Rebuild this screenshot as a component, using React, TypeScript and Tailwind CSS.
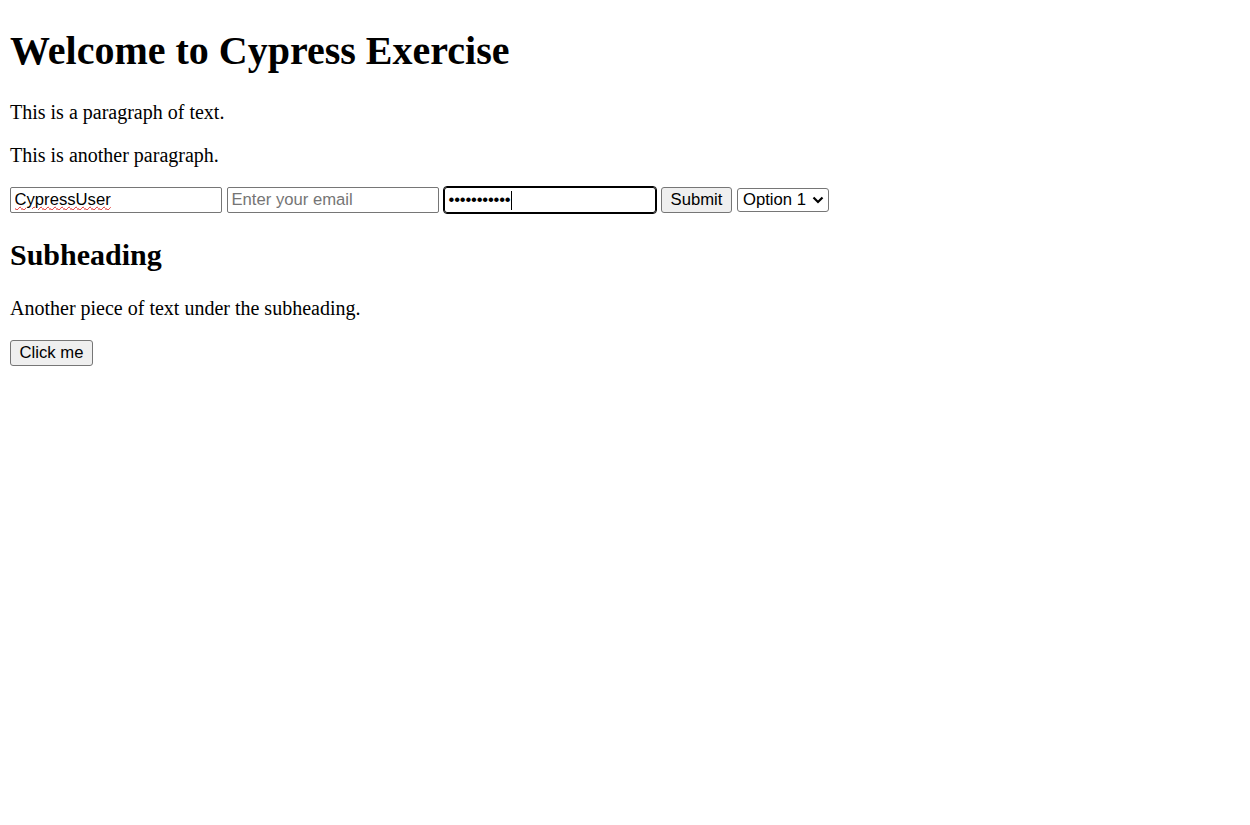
import React from "react";

const sans = "font-['Liberation_Sans',Arial,sans-serif]";

export default function App() {
  return (
    <div className="min-h-screen bg-white px-[10px] text-black font-['Liberation_Serif','Times_New_Roman',serif]">
      <div className="pt-[0.1px]">
        <h1 className="mt-[26.8px] mb-[26.8px] text-[40px] font-bold leading-[normal]">
          Welcome to Cypress Exercise
        </h1>
        <p className="my-[20px] text-[20px] leading-[normal]">This is a paragraph of text.</p>
        <p className="my-[20px] text-[20px] leading-[normal]">This is another paragraph.</p>

        <div className={`flex h-[26.4px] items-start gap-[5px] pt-[0.4px] ${sans} text-[16.67px] leading-[normal]`}>
          <input
            type="text"
            defaultValue="CypressUser"
            spellCheck={false}
            className="box-border h-[26px] w-[212px] rounded-[2px] border border-[#767676] bg-white px-[3.5px] text-black underline decoration-[#e02020] decoration-wavy decoration-[1px] underline-offset-[1px] outline-none"
          />
          <input
            type="email"
            placeholder="Enter your email"
            className="box-border h-[26px] w-[212px] rounded-[2px] border border-[#767676] bg-white px-[3.5px] text-black outline-none placeholder:text-[#757575]"
          />
          <div className="box-border flex h-[26px] w-[212px] items-center rounded-[3px] border border-black bg-white px-[3.5px] outline outline-1 outline-black">
            <span className="tracking-[-0.2px]">•••••••••••</span>
            <span className="ml-[1px] h-[19px] w-[1px] bg-black" />
          </div>
          <button
            type="button"
            className="box-border h-[26px] w-[71px] rounded-[3px] border border-[#767676] bg-[#efefef] text-center text-black"
          >
            Submit
          </button>
          <div className="mt-[1px] box-border flex h-[23.5px] w-[92px] items-center justify-between rounded-[3px] border border-[#767676] bg-white pl-[5px] pr-[4px] text-black">
            <span>Option 1</span>
            <svg width="12" height="8" viewBox="0 0 12 8" className="mt-[1px]">
              <path d="M1.5 1.5 L6 6 L10.5 1.5" fill="none" stroke="black" strokeWidth="2.2" />
            </svg>
          </div>
        </div>

        <h2 className="mt-[24.9px] mb-[24.9px] text-[30px] font-bold leading-[normal]">Subheading</h2>
        <p className="my-[20px] text-[20px] leading-[normal]">Another piece of text under the subheading.</p>
        <div>
          <button
            type="button"
            className={`box-border h-[26px] w-[83px] rounded-[3px] border border-[#767676] bg-[#efefef] text-center text-black ${sans} text-[16.67px] leading-[normal]`}
          >
            Click me
          </button>
        </div>
      </div>
    </div>
  );
}
